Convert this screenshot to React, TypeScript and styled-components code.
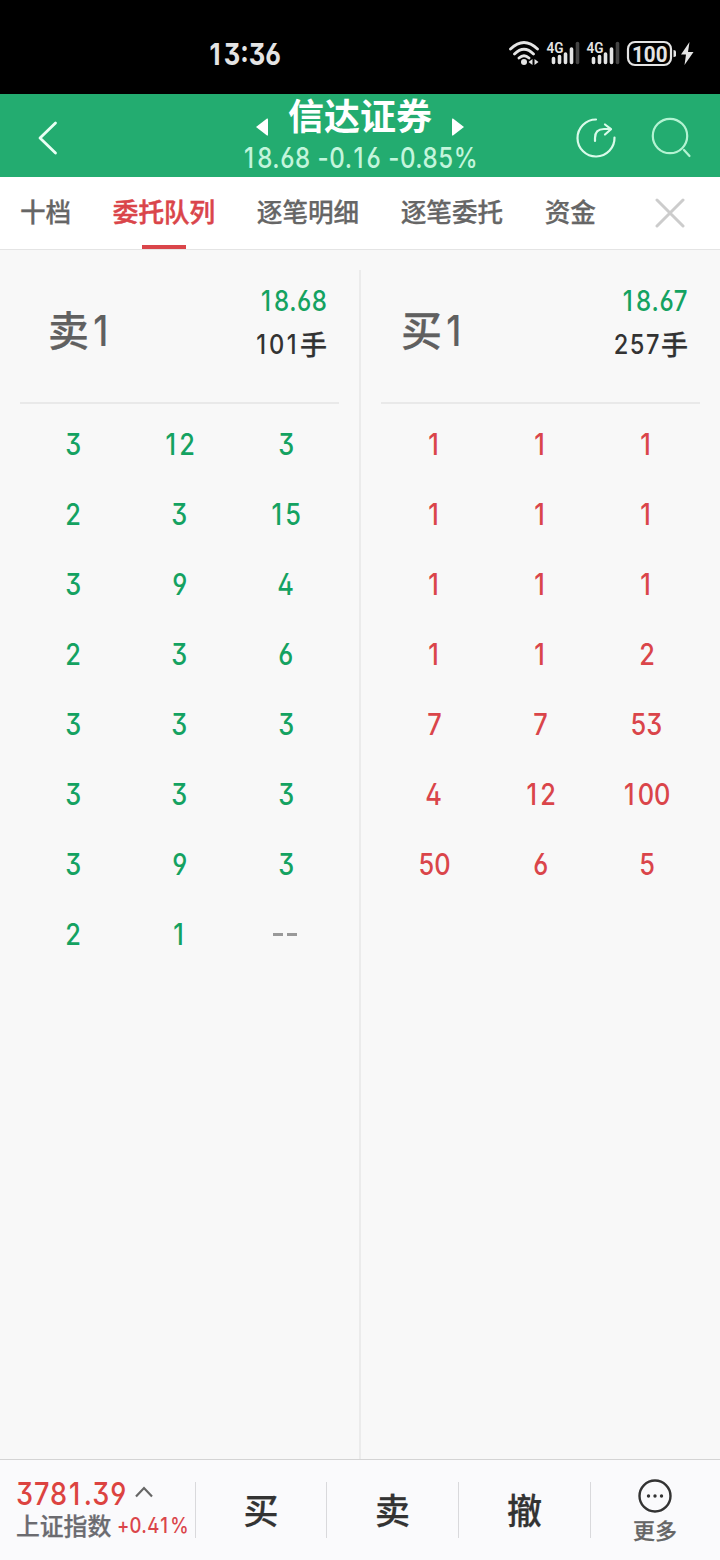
import React from 'react';
import styled, { createGlobalStyle } from 'styled-components';

const GlobalStyle = createGlobalStyle`
  * { box-sizing: border-box; }
  body { margin: 0; background: #f8f8f8; }
`;

const cjk = `'Noto Sans CJK SC', sans-serif`;
const green = '#14a261';
const red = '#da454a';

const Screen = styled.div`
  display: flex;
  flex-direction: column;
  width: 720px;
  height: 1560px;
  background: #f8f8f8;
  font-family: ${cjk};
  font-weight: 500;
  -webkit-text-stroke: 0.25px currentColor;
  overflow: hidden;
`;

interface FigureProps {
  $size: number;
  $color?: string;
  $weight?: number;
  $scale?: number;
  $origin?: string;
  $gap?: number;
}

/* Narrow DIN-like figures with flat-topped 3 and open 6/9 */
const Figure = styled.span<FigureProps>`
  display: inline-block;
  font-family: Inter, sans-serif;
  font-feature-settings: 'cv09' 1, 'ss01' 1;
  font-size: ${p => p.$size}px;
  line-height: 1;
  font-weight: ${p => p.$weight ?? 500};
  letter-spacing: ${p => p.$gap ?? 0}px;
  -webkit-text-stroke: 0;
  color: ${p => p.$color ?? 'inherit'};
  transform: scaleX(${p => p.$scale ?? 0.86});
  transform-origin: ${p => p.$origin ?? 'center'} center;
  white-space: nowrap;
`;

/* Gives the narrow digit 1 about the same advance as the others */
const One = styled.span`
  margin-left: 0.04em;
  letter-spacing: 0.13em;
`;

function Num({ children, ...rest }: FigureProps & { children: string }) {
  return (
    <Figure {...rest}>
      {children.split(/(1)/).filter(Boolean).map((part, i) => (part === '1' ? <One key={i}>1</One> : part))}
    </Figure>
  );
}

const StatusBar = styled.header`
  flex: none;
  display: flex;
  justify-content: space-between;
  align-items: center;
  height: 94px;
  padding: 14px 26px 0 202px;
  background: #000;
  color: #e4e4e4;
`;

const StatusIcons = styled.svg`
  display: block;
  width: 186px;
  height: 30px;
  -webkit-text-stroke: 0;
`;

const Header = styled.div`
  flex: none;
  display: grid;
  grid-template-columns: 240px 240px 240px;
  height: 83px;
  background: #23ac70;
  color: #fff;
`;

const HeaderLeft = styled.div`
  display: flex;
  align-items: center;
  padding: 4px 0 0 34px;
`;

const HeaderRight = styled.div`
  display: flex;
  align-items: center;
  justify-content: flex-end;
  gap: 32px;
  padding: 4px 26px 0 0;
`;

const TitleBlock = styled.div`
  display: flex;
  flex-direction: column;
  align-items: center;
`;

const TitleRow = styled.div`
  display: flex;
  align-items: center;
  gap: 19px;
  height: 46px;
`;

const Title = styled.h1`
  margin: -6px 0 0;
  font-size: 36px;
  line-height: 46px;
  font-weight: 700;
  -webkit-text-stroke: 0;
`;

const Arrow = styled.svg`
  width: 14px;
  height: 18px;
  margin-top: 20px;
`;

const Quote = styled.div`
  margin: 4px 0 0 1px;
  color: #c3f5dc;
  line-height: 28px;
`;

const Tabs = styled.nav`
  flex: none;
  display: flex;
  gap: 41.6px;
  height: 73px;
  padding-left: 20px;
  background: #fff;
  border-bottom: 1px solid #e4e4e4;
`;

const Tab = styled.div<{ $active?: boolean }>`
  display: flex;
  flex-direction: column;
  align-items: center;
  justify-content: space-between;
  height: 72px;
  font-size: 25.6px;
  line-height: 68px;
  color: ${p => (p.$active ? red : '#666')};
  -webkit-text-stroke: ${p => (p.$active ? 0.5 : 0.25)}px currentColor;
  &::after {
    content: '';
    width: 44px;
    height: 4px;
    flex: none;
    background: ${p => (p.$active ? red : 'transparent')};
  }
`;

const Close = styled.svg`
  width: 30px;
  height: 30px;
  margin: 21px 0 0 17px;
`;

const Board = styled.main`
  flex: 1;
  display: grid;
  grid-template-columns: 361px 359px;
  padding-top: 20px;
`;

const Side = styled.section<{ $divided?: boolean }>`
  padding: 0 20px;
  border-right: ${p => (p.$divided ? '2px solid #ebebeb' : '0')};
`;

const SideHead = styled.div<{ $inset: number }>`
  display: flex;
  justify-content: space-between;
  height: 134px;
  padding: 0 12px 0 ${p => p.$inset}px;
  border-bottom: 2px solid #e9e9e9;
`;

const SideName = styled.div`
  display: flex;
  align-items: center;
  height: 116px;
  font-size: 41px;
  color: #606060;
  ${Figure} {
    margin: 5px 0 0 1px;
  }
`;

const SideInfo = styled.div`
  display: flex;
  flex-direction: column;
  align-items: flex-end;
  padding-top: 9px;
`;

const InfoLine = styled.div`
  display: flex;
  align-items: center;
  height: 43px;
  font-size: 27px;
  color: #333;
`;

const VolumeLine = styled(InfoLine)`
  height: 42px;
  ${Figure} {
    margin-top: 3px;
  }
`;

const Queue = styled.div`
  display: grid;
  grid-template-columns: repeat(3, 1fr);
  grid-auto-rows: 70px;
  padding-top: 6px;
  place-items: center;
`;

const Footer = styled.footer`
  flex: none;
  display: grid;
  grid-template-columns: 196px 131px 132px 132px 129px;
  height: 101px;
  padding-top: 22px;
  border-top: 1px solid #d4d4d4;
  background: #fafafc;
`;

const Cell = styled.div`
  display: flex;
  align-items: center;
  justify-content: center;
  height: 56px;
  padding-bottom: 4px;
  border-right: 1px solid #d9d9dc;
  font-size: 35px;
  color: #333;
`;

const IndexCell = styled(Cell)`
  flex-direction: column;
  align-items: flex-start;
  justify-content: flex-start;
  padding-left: 16px;
`;

const IndexRow = styled.div`
  flex: none;
  display: flex;
  align-items: center;
  height: 32px;
  margin-top: -4px;
`;

const IndexName = styled.div`
  flex: none;
  display: flex;
  align-items: center;
  height: 29px;
  line-height: 26px;
  font-size: 23.8px;
  color: #6b6b70;
  white-space: nowrap;
  ${Figure} {
    margin: 2px 0 0 6px;
  }
`;

const Caret = styled.svg`
  flex: none;
  width: 18px;
  height: 12px;
  margin: -4px 0 0 -10px;
`;

const MoreCell = styled(Cell)`
  flex-direction: column;
  justify-content: flex-start;
  height: 72px;
  margin-top: -4px;
  padding: 0 1px 0 0;
  border: 0;
  font-size: 22px;
  line-height: 30px;
  color: #666;
`;

const MoreIcon = styled.svg`
  flex: none;
  width: 36px;
  height: 36px;
`;

const tabs = ['十档', '委托队列', '逐笔明细', '逐笔委托', '资金'];
const sells = '3 12 3 2 3 15 3 9 4 2 3 6 3 3 3 3 3 3 3 9 3 2 1 --'.split(' ');
const buys = '1 1 1 1 1 1 1 1 1 1 1 2 7 7 53 4 12 100 50 6 5'.split(' ');

const Signal = ({ x }: { x: number }) => (
  <g transform={`translate(${x} 0)`}>
    <text x="-0.5" y="14" fontFamily="Roboto, sans-serif" fontSize="15.500" fontWeight="600" textLength="17" lengthAdjust="spacingAndGlyphs">4G</text>
    <g strokeWidth="3.6" strokeLinecap="round" stroke="#e4e4e4">
      <path d="M6.500 19.500v4M12.500 17.500v6M18.500 15v8.500M24.500 10v13.500" />
      <path d="M30.500 4.500v19" stroke="#444" />
    </g>
  </g>
);

function Amount({ value, color }: { value: string; color: string }) {
  return value === '--' ? (
    <svg width="26" height="4" viewBox="0 0 26 4"><path d="M0 1.500h10M14 1.500h10" stroke="#999" strokeWidth="3" /></svg>
  ) : (
    <Num $size={29.5} $color={color}>{value}</Num>
  );
}

export default function App() {
  return (
    <Screen>
      <GlobalStyle />
      <StatusBar>
        <Num $size={30} $weight={650} $scale={0.85}>13:36</Num>
        <StatusIcons viewBox="0 0 186 30" fill="#e4e4e4">
          <g fill="none" stroke="#e4e4e4" strokeWidth="2.800" strokeLinecap="round">
            <path d="M2.500 10Q16 -3 29.500 10M6.500 15Q16 5.500 25.500 15M11 19Q16 14.500 21 19" />
          </g>
          <circle cx="16" cy="23" r="3" />
          <path d="M24.500 20v6l-4-3zM26.500 20v6l4-3z" />
          <Signal x={39} />
          <Signal x={79} />
          <rect x="120" y="3" width="43" height="23" rx="7" fill="none" stroke="#e4e4e4" strokeWidth="2.200" />
          <text x="124" y="22.500" fontFamily="Roboto, sans-serif" fontWeight="700" fontSize="22" textLength="35.500" lengthAdjust="spacingAndGlyphs">100</text>
          <path d="M165.500 11q2.500 0 2.500 1.500v4q0 1.500 -2.500 1.500z" />
          <path d="M181.500 3L173 15.500h5L176.500 26L185.500 13h-5.500z" />
        </StatusIcons>
      </StatusBar>

      <Header>
        <HeaderLeft>
          <svg width="26" height="36" viewBox="0 0 26 36" fill="none" stroke="#e9fff4" strokeWidth="2.800" strokeLinecap="round" strokeLinejoin="round">
            <path d="M21.500 3L6 18L21.500 33" />
          </svg>
        </HeaderLeft>
        <TitleBlock>
          <TitleRow>
            <Arrow viewBox="0 0 14 18" fill="#fff"><path d="M1 9L12 .500q1 -.500 1 1v15q0 1.500 -1 1z" /></Arrow>
            <Title>信达证券</Title>
            <Arrow viewBox="0 0 14 18" fill="#fff"><path d="M13 9L2 .500q-1 -.500 -1 1v15q0 1.500 1 1z" /></Arrow>
          </TitleRow>
          <Quote><Num $size={28} $weight={450} $gap={0.6}>18.68 -0.16 -0.85%</Num></Quote>
        </TitleBlock>
        <HeaderRight>
          <svg width="44" height="44" viewBox="0 0 44 44" fill="none" stroke="#d9fbea" strokeWidth="2.200" strokeLinecap="round" strokeLinejoin="round">
            <path d="M22 3.500A18.500 18.500 0 1 0 40.500 21.500" />
            <path d="M21 25v-3q0 -9 9 -9h7M31 8.500l6 4.700L31 18.500" />
          </svg>
          <svg width="44" height="44" viewBox="0 0 44 44" fill="none" stroke="#b3f3d2" strokeWidth="2.200" strokeLinecap="round">
            <circle cx="20" cy="20" r="17.200" /><path d="M34 34l5.500 6" />
          </svg>
        </HeaderRight>
      </Header>

      <Tabs>
        {tabs.map((t, i) => <Tab key={t} $active={i === 1}>{t}</Tab>)}
        <Close viewBox="0 0 30 30" stroke="#ccc" strokeWidth="3" strokeLinecap="round"><path d="M2 2l26 26M28 2L2 28" /></Close>
      </Tabs>

      <Board>
        <Side $divided>
          <SideHead $inset={28}>
            <SideName>卖<Num $size={42}>1</Num></SideName>
            <SideInfo>
              <InfoLine><Num $size={28} $color={green} $origin="right" $gap={0.6}>18.68</Num></InfoLine>
              <VolumeLine><Num $size={27.5} $weight={450} $origin="right" $gap={1.8}>101</Num>手</VolumeLine>
            </SideInfo>
          </SideHead>
          <Queue>{sells.map((v, i) => <Amount key={i} value={v} color={green} />)}</Queue>
        </Side>
        <Side>
          <SideHead $inset={20}>
            <SideName>买<Num $size={42}>1</Num></SideName>
            <SideInfo>
              <InfoLine><Num $size={28} $color={green} $origin="right" $gap={1}>18.67</Num></InfoLine>
              <VolumeLine><Num $size={27.5} $weight={450} $origin="right" $gap={1.8}>257</Num>手</VolumeLine>
            </SideInfo>
          </SideHead>
          <Queue>{buys.map((v, i) => <Amount key={i} value={v} color={red} />)}</Queue>
        </Side>
      </Board>

      <Footer>
        <IndexCell>
          <IndexRow>
            <Num $size={31.5} $color="#dc4340" $origin="left" $gap={1.1}>3781.39</Num>
            <Caret viewBox="0 0 18 12" fill="none" stroke="#666" strokeWidth="2.200"><path d="M1 10.500L9 2l8 8.500" /></Caret>
          </IndexRow>
          <IndexName>上证指数<Num $size={21.5} $color={red} $origin="left" $gap={0.3}>+0.41%</Num></IndexName>
        </IndexCell>
        <Cell>买</Cell>
        <Cell>卖</Cell>
        <Cell>撤</Cell>
        <MoreCell>
          <MoreIcon viewBox="0 0 36 36" fill="#333">
            <circle cx="18" cy="18" r="15.500" fill="none" stroke="#333" strokeWidth="2.400" />
            <circle cx="11.500" cy="18" r="1.700" /><circle cx="18" cy="18" r="1.700" /><circle cx="24.500" cy="18" r="1.700" />
          </MoreIcon>
          更多
        </MoreCell>
      </Footer>
    </Screen>
  );
}
